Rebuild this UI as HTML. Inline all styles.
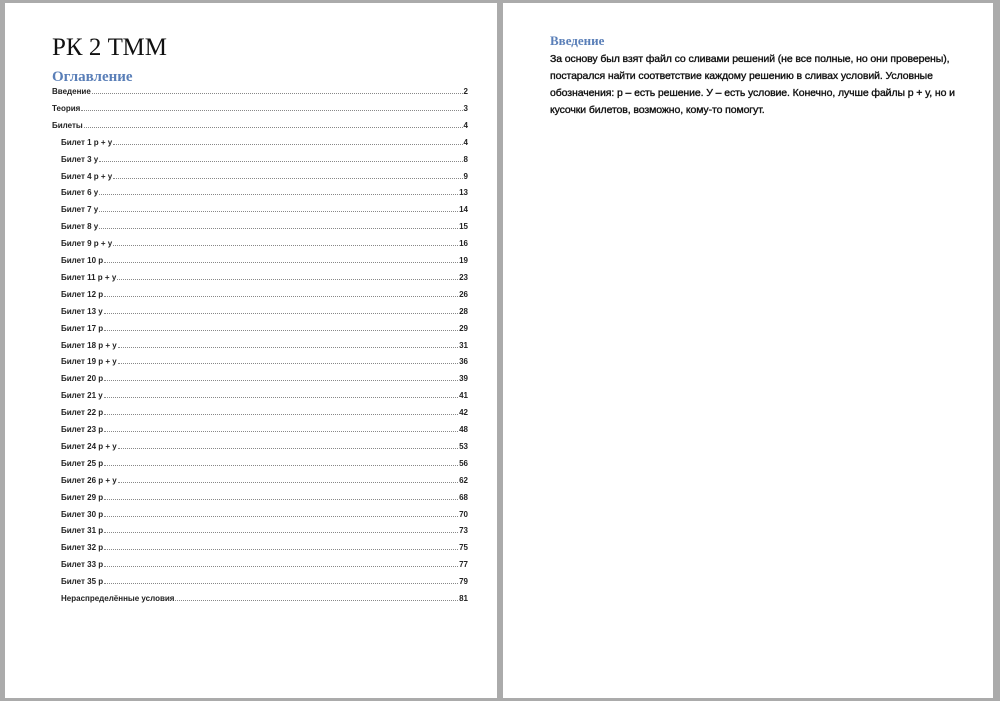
<!DOCTYPE html>
<html><head><meta charset="utf-8"><style>
body{margin:0;width:1000px;height:701px;background:#ababab;position:relative;overflow:hidden;font-family:"Liberation Sans",sans-serif;}
.page{position:absolute;background:#fff;top:3px;height:695px;}
#p1{left:5px;width:492px;}
#p2{left:503px;width:490px;}
.t{position:absolute;left:47px;top:31px;font-family:"Liberation Serif",serif;font-size:25px;color:#111;}
.h{position:absolute;font-family:"Liberation Serif",serif;font-weight:bold;color:#5a7fb8;}
.row{position:absolute;left:47px;width:416px;height:12px;display:flex;font-size:8px;font-weight:bold;color:#222;align-items:flex-end;}
.row.i{left:56px;width:407px;}
.row .d{flex:1;border-bottom:1px dotted #888;margin:0 1px 2px 1px;}
.p{position:absolute;left:47px;top:48px;width:418px;font-size:10.5px;line-height:17px;color:#111;-webkit-text-stroke:0.35px #111;letter-spacing:-0.1px;}
</style></head><body>
<div class="page" id="p1">
<div class="t">РК 2 ТММ</div>
<div class="h" style="left:47px;top:66px;font-size:15px;">Оглавление</div>
<div id="toc"></div>
</div>
<div class="page" id="p2">
<div class="h" style="left:47px;top:30px;font-size:13px;">Введение</div>
<div class="p">За основу был взят файл со сливами решений (не все полные, но они проверены), постарался найти соответствие каждому решению в сливах условий. Условные обозначения: р – есть решение. У – есть условие. Конечно, лучше файлы р + у, но и кусочки билетов, возможно, кому-то помогут.</div>
</div>
<script>
var e=[["Введение","2",0],["Теория","3",0],["Билеты","4",0],["Билет 1 р + у","4",1],["Билет 3 у","8",1],["Билет 4 р + у","9",1],["Билет 6 у","13",1],["Билет 7 у","14",1],["Билет 8 у","15",1],["Билет 9 р + у","16",1],["Билет 10 р","19",1],["Билет 11 р + у","23",1],["Билет 12 р","26",1],["Билет 13 у","28",1],["Билет 17 р","29",1],["Билет 18 р + у","31",1],["Билет 19 р + у","36",1],["Билет 20 р","39",1],["Билет 21 у","41",1],["Билет 22 р","42",1],["Билет 23 р","48",1],["Билет 24 р + у","53",1],["Билет 25 р","56",1],["Билет 26 р + у","62",1],["Билет 29 р","68",1],["Билет 30 р","70",1],["Билет 31 р","73",1],["Билет 32 р","75",1],["Билет 33 р","77",1],["Билет 35 р","79",1],["Нераспределённые условия","81",1]];
var h="";e.forEach(function(x,k){h+='<div class="row'+(x[2]?' i':'')+'" style="top:'+(81+k*16.9).toFixed(1)+'px"><span>'+x[0]+'</span><span class="d"></span><span>'+x[1]+'</span></div>';});
document.getElementById("toc").innerHTML=h;
</script>
</body></html>
